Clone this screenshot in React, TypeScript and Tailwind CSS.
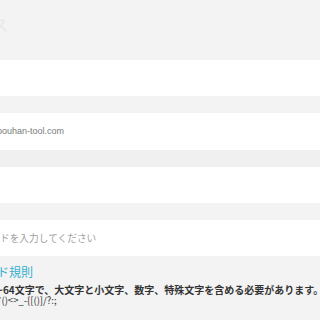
export default function App() {
  const jp = { fontFamily: '"Noto Sans CJK JP", "Noto Sans", sans-serif' }
  return (
    <div className="w-[320px] h-[320px] overflow-hidden bg-[#f3f3f3]" style={jp}>
      <div className="h-[60px] pt-[14px]">
        <div className="-ml-[8px] text-[16px] leading-[20px] text-[#e8e8e8]">ス</div>
      </div>
      <div className="h-[36px] bg-white" />
      <div className="h-[17px]" />
      <div className="h-[37px] bg-white flex items-center">
        <span className="-ml-[3px] text-[9px] text-[#7a7a7a]" style={{ fontFamily: '"Liberation Sans", sans-serif' }}>
          bouhan-tool.com
        </span>
      </div>
      <div className="h-[17px] bg-[#f0f0f0]" />
      <div className="h-[36px] bg-white" />
      <div className="h-[17px]" />
      <div className="h-[36px] bg-white flex items-center">
        <span className="text-[9.7px] text-[#a0a0a0]">ドを入力してください</span>
      </div>
      <div className="pt-[8px]">
        <div className="-ml-[3px] text-[12px] leading-[16px] text-[#35b0cf]">ド規則</div>
        <div className="-ml-[3px] mt-[4px] text-[10px] leading-[11px] font-bold text-[#333] whitespace-nowrap">
          ~64文字で、大文字と小文字、数字、特殊文字を含める必要があります。
        </div>
        <div className="-ml-[3px] text-[9.5px] leading-[11px] text-[#333] whitespace-nowrap">
          *()&lt;&gt;_-{'{'}[()]/?:;
        </div>
      </div>
    </div>
  )
}
